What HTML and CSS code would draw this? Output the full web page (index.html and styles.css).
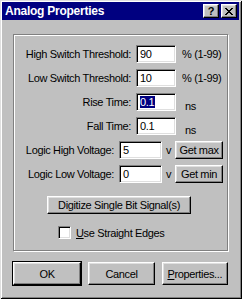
FILE: index.html
```html
<!DOCTYPE html>
<html>
<head>
<meta charset="utf-8">
<link rel="stylesheet" href="styles.css">
</head>
<body>
<div class="window">
  <div class="titlebar">
    <span class="title">Analog Properties</span>
    <div class="tbtns">
      <span class="tbtn q">?</span>
      <span class="tbtn"><svg width="8" height="7" viewBox="0 0 8 7"><path d="M0 0h2v1h1v1h2v-1h1v-1h2v1h-1v1h-1v1h-1v1h1v1h1v1h1v1h-2v-1h-1v-1h-2v1h-1v1h-2v-1h1v-1h1v-1h1v-1h-1v-1h-1v-1h-1z" fill="#000"/></svg></span>
    </div>
  </div>
  <div class="content">
    <div class="group">
      <div class="row">
        <span class="label">High Switch Threshold:</span>
        <span class="field">90</span>
        <span class="unit">% (1-99)</span>
      </div>
      <div class="row">
        <span class="label">Low Switch Threshold:</span>
        <span class="field">10</span>
        <span class="unit">% (1-99)</span>
      </div>
      <div class="row">
        <span class="label">Rise Time:</span>
        <span class="field"><span class="sel">0.1</span></span>
        <span class="unit ns">ns</span>
      </div>
      <div class="row">
        <span class="label">Fall Time:</span>
        <span class="field">0.1</span>
        <span class="unit ns">ns</span>
      </div>
      <div class="row">
        <span class="label short">Logic High Voltage:</span>
        <span class="field wide">5</span>
        <span class="volt">v</span>
        <span class="btn small">Get max</span>
      </div>
      <div class="row">
        <span class="label short">Logic Low Voltage:</span>
        <span class="field wide">0</span>
        <span class="volt">v</span>
        <span class="btn small">Get min</span>
      </div>
      <div class="digit-row">
        <span class="btn digit">Digitize Single Bit Signal(s)</span>
      </div>
      <div class="check-row">
        <span class="checkbox"></span>
        <span class="check-label"><u>U</u>se Straight Edges</span>
      </div>
    </div>
    <div class="buttons">
      <span class="btn big default">OK</span>
      <span class="btn big">Cancel</span>
      <span class="btn big"><u>P</u>roperties...</span>
    </div>
  </div>
</div>
</body>
</html>
```
FILE: styles.css
```css
html, body {
  margin: 0;
  padding: 0;
}
body {
  width: 242px;
  height: 299px;
  overflow: hidden;
  background: #c0c0c0;
  font-family: "Liberation Sans", Arial, sans-serif;
  font-size: 11px;
  color: #000;
}
.window {
  box-sizing: border-box;
  width: 242px;
  height: 299px;
  padding: 2px 3px 3px 2px;
  background: #c0c0c0;
  box-shadow: inset 1px 1px #dfdfdf, inset -1px -1px #000, inset 2px 2px #fff, inset -2px -2px #808080;
  display: flex;
  flex-direction: column;
}
.titlebar {
  height: 18px;
  background: #000080;
  color: #fff;
  display: flex;
  align-items: center;
  justify-content: space-between;
  padding: 0 2px 0 3px;
}
.title {
  font-weight: bold;
  font-size: 12px;
  letter-spacing: -0.25px;
}
.tbtns {
  display: flex;
  gap: 2px;
}
.tbtn {
  box-sizing: border-box;
  width: 16px;
  height: 14px;
  background: #c0c0c0;
  border: 1px solid;
  border-color: #fff #000 #000 #fff;
  box-shadow: inset -1px -1px #808080, inset 1px 1px #dfdfdf;
  display: flex;
  align-items: center;
  justify-content: center;
  color: #000;
}
.tbtn.q {
  font-weight: bold;
  font-size: 11px;
  line-height: 1;
}
.content {
  flex: 1;
  padding: 14px 11px 0 11px;
}
.group {
  box-sizing: border-box;
  height: 217px;
  border: 1px solid #808080;
  box-shadow: inset 1px 1px #fff, 1px 1px #fff;
  padding-top: 7px;
}
.row {
  display: flex;
  align-items: center;
  height: 24px;
  letter-spacing: -0.35px;
}
.label {
  width: 117px;
  text-align: right;
  white-space: nowrap;
}
.label.short {
  width: 100px;
}
.field {
  box-sizing: border-box;
  width: 40px;
  height: 18px;
  margin-left: 5px;
  background: #fff;
  border: 1px solid;
  border-color: #808080 #fff #fff #808080;
  box-shadow: inset 1px 1px #000, inset -1px -1px #dfdfdf;
  padding: 2px 0 0 3px;
  line-height: 13px;
}
.field.wide {
  width: 43px;
}
.sel {
  background: #000080;
  color: #fff;
  padding: 0 1px 0 0;
}
.unit {
  margin-left: 6px;
  white-space: nowrap;
}
.unit.ns {
  margin-left: 9px;
  padding-top: 8px;
}
.volt {
  margin-left: 4px;
  width: 5px;
}
.btn {
  box-sizing: border-box;
  background: #c0c0c0;
  border: 1px solid;
  border-color: #fff #000 #000 #fff;
  box-shadow: inset -1px -1px #808080, inset 1px 1px #dfdfdf;
  display: flex;
  align-items: center;
  justify-content: center;
  white-space: nowrap;
  letter-spacing: -0.35px;
}
.btn.small {
  width: 48px;
  height: 18px;
  margin-left: 4px;
}
.digit-row {
  padding: 10px 0 0 33px;
}
.btn.digit {
  width: 144px;
  height: 18px;
}
.check-row {
  display: flex;
  align-items: center;
  padding: 12px 0 0 44px;
  letter-spacing: -0.35px;
}
.checkbox {
  box-sizing: border-box;
  width: 13px;
  height: 13px;
  background: #fff;
  border: 1px solid;
  border-color: #808080 #fff #fff #808080;
  box-shadow: inset 1px 1px #000, inset -1px -1px #dfdfdf;
}
.check-label {
  margin-left: 5px;
}
.buttons {
  display: flex;
  gap: 7px;
  margin-top: 11px;
}
.btn.big {
  width: 67px;
  height: 23px;
}
.btn.default {
  width: 69px;
  border-color: #fff #000 #000 #fff;
  box-shadow: inset -1px -1px #808080, inset 1px 1px #dfdfdf, 0 0 0 1px #000;
}
```
